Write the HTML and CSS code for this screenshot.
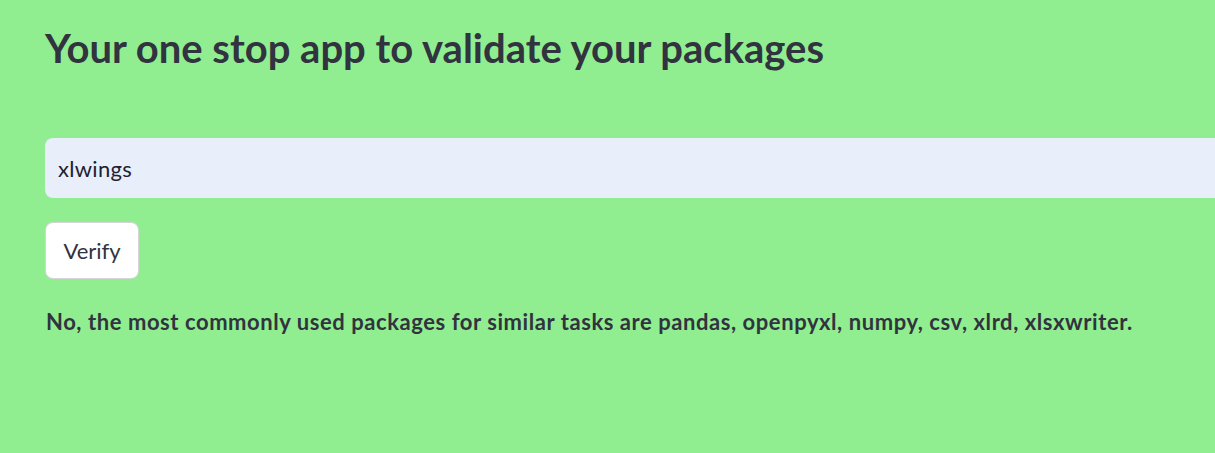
FILE: index.html
```html
<!DOCTYPE html>
<html>
<head>
<meta charset="utf-8">
<link rel="stylesheet" href="styles.css">
</head>
<body>
<main class="app">
  <h1 class="title">Your one stop app to validate your packages</h1>
  <div class="field">
    <input class="text-input" type="text" value="xlwings">
  </div>
  <div class="actions">
    <button class="btn" type="button">Verify</button>
  </div>
  <p class="result">No, the most commonly used packages for similar tasks are pandas, openpyxl, numpy, csv, xlrd, xlsxwriter.</p>
</main>
</body>
</html>
```
FILE: styles.css
```css
html, body {
  margin: 0;
  padding: 0;
  overflow: hidden;
}
body {
  background: #90ee90;
  color: #31333f;
  font-family: Lato, "Noto Sans", sans-serif;
  width: 1215px;
  height: 453px;
}
.app {
  padding: 22px 0 0 45px;
  display: flex;
  flex-direction: column;
}
.title {
  margin: 0;
  font-size: 40px;
  font-weight: 700;
  line-height: 52px;
  letter-spacing: 0;
}
.field {
  margin-top: 64px;
  width: 1200px;
}
.text-input {
  box-sizing: border-box;
  width: 100%;
  height: 60px;
  border: none;
  border-radius: 8px;
  background: #e8effb;
  padding: 0 13px;
  font-family: inherit;
  font-size: 22px;
  letter-spacing: 0.3px;
  color: #1f2230;
  outline: none;
}
.actions {
  margin-top: 24px;
}
.btn {
  box-sizing: border-box;
  width: 94px;
  height: 57px;
  background: #ffffff;
  border: 1px solid rgba(49, 51, 63, 0.2);
  border-radius: 8px;
  font-family: inherit;
  font-size: 22px;
  color: #31333f;
  padding: 0;
}
.result {
  margin: 27px 0 0 1px;
  font-size: 22px;
  font-weight: 700;
  line-height: 32px;
  letter-spacing: 0.56px;
}
```
